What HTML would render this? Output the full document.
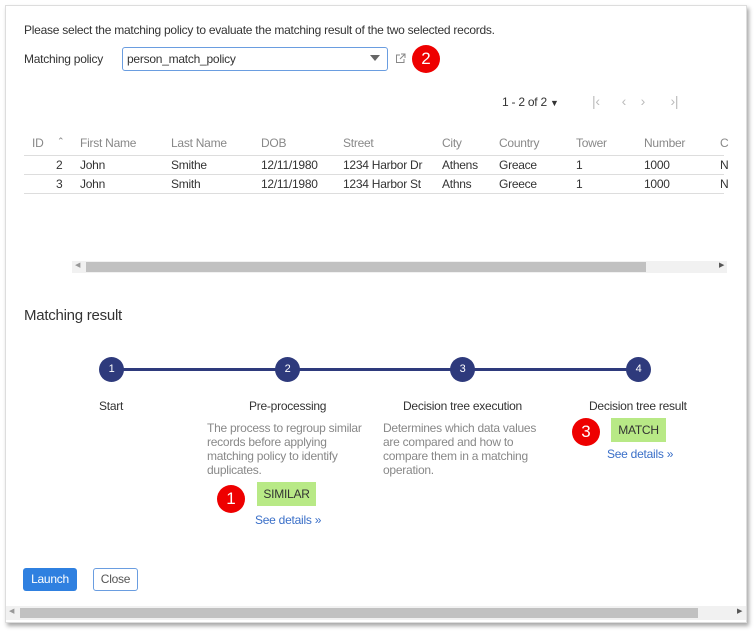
<!DOCTYPE html>
<html><head><meta charset="utf-8"><style>
*{box-sizing:border-box;margin:0;padding:0}
body{width:754px;height:633px;background:#fff;font-family:"Liberation Sans",sans-serif;font-size:12px;letter-spacing:-0.25px;color:#333;position:relative;overflow:hidden}
.frame{position:absolute;left:5px;top:5px;width:742px;height:618px;background:#fff;border:1px solid #ddd;box-shadow:2px 3px 4px rgba(0,0,0,.35)}
.a{position:absolute;white-space:nowrap}
.g{color:#888}
.badge{position:absolute;width:28px;height:28px;border-radius:50%;background:#e00;color:#fff;font-size:17px;text-align:center;line-height:28px;letter-spacing:0}
.step{position:absolute;width:25px;height:25px;border-radius:50%;background:#2e3a7c;color:#fff;font-size:11px;text-align:center;line-height:25px;top:357px}
.hl{position:absolute;left:24px;width:700px;height:1px;background:#ddd}
.tag{position:absolute;background:#b8e986;color:#333;text-align:center;line-height:24px;height:24px}
.lnk{color:#3a6fc8}
</style></head><body>
<div class="frame"></div>
<div class="a" style="left:24px;top:23px">Please select the matching policy to evaluate the matching result of the two selected records.</div>
<div class="a" style="left:24px;top:52px">Matching policy</div>
<div class="a" style="left:122px;top:47px;width:266px;height:24px;border:1px solid #6a9de0;border-radius:3px;padding:4px 4px">person_match_policy</div>
<div class="a" style="left:370px;top:55px;width:0;height:0;border-left:5px solid transparent;border-right:5px solid transparent;border-top:6px solid #666"></div>
<svg class="a" style="left:395px;top:53px" width="11" height="11" viewBox="0 0 11 11"><path d="M5 2H1.5v7.5H9V6M6 1h4v4M10 1L5 6" fill="none" stroke="#888" stroke-width="1"/></svg>
<div class="badge" style="left:412px;top:45px">2</div>
<div class="a" style="left:502px;top:95px">1 - 2 of 2 <span style="font-size:9px">▼</span></div>
<div class="a" style="left:592px;top:93px;color:#bbb;font-size:14px">|‹&nbsp;&nbsp;&nbsp;&nbsp;&nbsp;&nbsp;‹&nbsp;&nbsp;&nbsp;&nbsp;›&nbsp;&nbsp;&nbsp;&nbsp;&nbsp;&nbsp;&nbsp;›|</div>
<div class="a g" style="left:32px;top:136px">ID</div>
<div class="a g" style="left:57px;top:136px;font-size:9px">⌃</div>
<div class="a g" style="left:80px;top:136px">First Name</div>
<div class="a g" style="left:171px;top:136px">Last Name</div>
<div class="a g" style="left:261px;top:136px">DOB</div>
<div class="a g" style="left:343px;top:136px">Street</div>
<div class="a g" style="left:442px;top:136px">City</div>
<div class="a g" style="left:499px;top:136px">Country</div>
<div class="a g" style="left:576px;top:136px">Tower</div>
<div class="a g" style="left:644px;top:136px">Number</div>
<div class="a g" style="left:720px;top:136px">C</div>
<div class="hl" style="top:155px"></div>
<div class="hl" style="top:174px"></div>
<div class="hl" style="top:193px"></div>
<div class="a" style="left:56px;top:158px">2</div><div class="a" style="left:80px;top:158px">John</div><div class="a" style="left:171px;top:158px">Smithe</div><div class="a" style="left:261px;top:158px">12/11/1980</div><div class="a" style="left:343px;top:158px">1234 Harbor Dr</div><div class="a" style="left:442px;top:158px">Athens</div><div class="a" style="left:499px;top:158px">Greace</div><div class="a" style="left:576px;top:158px">1</div><div class="a" style="left:644px;top:158px">1000</div><div class="a" style="left:720px;top:158px">N</div>
<div class="a" style="left:56px;top:177px">3</div><div class="a" style="left:80px;top:177px">John</div><div class="a" style="left:171px;top:177px">Smith</div><div class="a" style="left:261px;top:177px">12/11/1980</div><div class="a" style="left:343px;top:177px">1234 Harbor St</div><div class="a" style="left:442px;top:177px">Athns</div><div class="a" style="left:499px;top:177px">Greece</div><div class="a" style="left:576px;top:177px">1</div><div class="a" style="left:644px;top:177px">1000</div><div class="a" style="left:720px;top:177px">N</div>
<div class="a" style="left:72px;top:261px;width:655px;height:12px;background:#f1f1f1"></div>
<div class="a" style="left:86px;top:262px;width:560px;height:10px;background:#c1c1c1"></div>
<div class="a" style="left:75px;top:261px;font-size:7px;color:#999">◀</div>
<div class="a" style="left:719px;top:261px;font-size:7px;color:#555">▶</div>
<div class="a" style="left:24px;top:307px;font-size:15px">Matching result</div>
<div class="a" style="left:112px;top:368px;width:526px;height:3px;background:#2e3a7c"></div>
<div class="step" style="left:99px">1</div>
<div class="step" style="left:275px">2</div>
<div class="step" style="left:450px">3</div>
<div class="step" style="left:626px">4</div>
<div class="a" style="left:99px;top:399px">Start</div>
<div class="a" style="left:249px;top:399px">Pre-processing</div>
<div class="a" style="left:403px;top:399px">Decision tree execution</div>
<div class="a" style="left:589px;top:399px">Decision tree result</div>
<div class="a g" style="left:207px;top:421px;line-height:14px">The process to regroup similar<br>records before applying<br>matching policy to identify<br>duplicates.</div>
<div class="a g" style="left:383px;top:421px;line-height:14px">Determines which data values<br>are compared and how to<br>compare them in a matching<br>operation.</div>
<div class="tag" style="left:257px;top:482px;width:59px">SIMILAR</div>
<div class="badge" style="left:217px;top:485px">1</div>
<div class="a lnk" style="left:255px;top:513px">See details »</div>
<div class="tag" style="left:611px;top:418px;width:55px">MATCH</div>
<div class="badge" style="left:572px;top:418px">3</div>
<div class="a lnk" style="left:607px;top:447px">See details »</div>
<div class="a" style="left:23px;top:568px;width:54px;height:23px;background:#2f80e0;border-radius:3px;color:#fff;text-align:center;line-height:23px">Launch</div>
<div class="a" style="left:93px;top:568px;width:45px;height:23px;border:1px solid #6a9de0;border-radius:3px;color:#555;text-align:center;line-height:21px">Close</div>
<div class="a" style="left:6px;top:606px;width:740px;height:14px;background:#f1f1f1"></div>
<div class="a" style="left:20px;top:608px;width:678px;height:10px;background:#c1c1c1"></div>
<div class="a" style="left:9px;top:607px;font-size:7px;color:#999">◀</div>
<div class="a" style="left:737px;top:607px;font-size:7px;color:#555">▶</div>
</body></html>
